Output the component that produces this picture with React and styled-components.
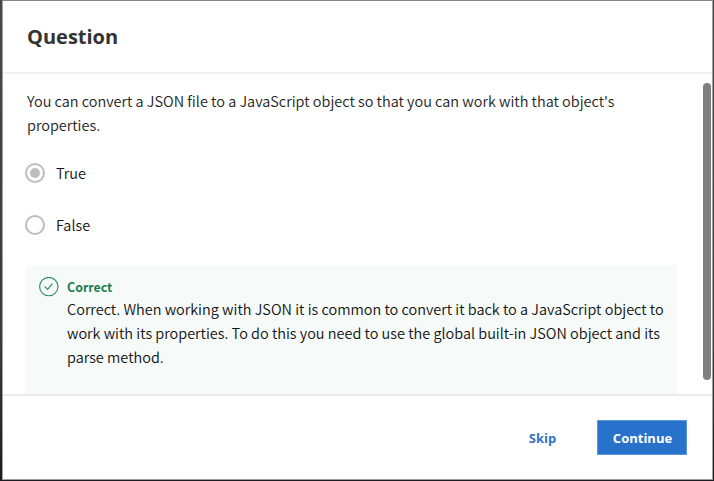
import React from "react";
import styled, { createGlobalStyle } from "styled-components";

const Global = createGlobalStyle`
  * { box-sizing: border-box; }
  body { margin: 0; background: #333335; overflow: hidden; }
`;

const Backdrop = styled.div`
  height: 481px;
  padding: 0 1px 1px 2px;
  background: linear-gradient(#48484a, #3c3c3e 70%, #1c1c1e);
`;

const Dialog = styled.section`
  height: 480px;
  display: flex;
  flex-direction: column;
  background: #fff;
  border: 1px solid #a0a0a0;
  border-top-color: #858585;
  color: #111;
  font-family: "Noto Sans CJK SC", "Noto Sans", sans-serif;
  font-weight: 350;
  font-size: 14.48px;
  line-height: 24px;
`;

const Header = styled.header`
  flex: 0 0 73px;
  padding: 20px 24px 0;
  border-bottom: 2px solid #efefef;
`;

const Title = styled.h1`
  margin: 0;
  font: 700 20px/32px "Open Sans", sans-serif;
  color: #333;
`;

const Content = styled.div`
  flex: 0 0 320px;
  display: flex;
  justify-content: space-between;
  overflow: hidden;
`;

const Body = styled.div`
  width: 651px;
  margin-left: 23px;
  padding-top: 15px;
`;

const Prompt = styled.p`
  margin: 0 0 24px 1px;
  color: #222;
`;

const Line = styled.span`
  display: block;
  white-space: nowrap;
`;

const Option = styled.label`
  display: flex;
  align-items: center;
  height: 24px;
  margin-bottom: 28px;
  gap: 11px;
`;

const Radio = styled.span`
  width: 20px;
  height: 20px;
  margin: -1px 0 0 -1px;
  display: grid;
  place-items: center;
  border: 2px solid #bdbdbd;
  border-radius: 50%;

  &::after {
    content: "";
    width: 10px;
    height: 10px;
    border-radius: 50%;
    background: ${(p) => (p.$checked ? "#bdbdbd" : "transparent")};
  }
`;

const Feedback = styled.div`
  height: 140px;
  padding: 12px 0 0 12.5px;
  display: flex;
  gap: 8.5px;
  background: #f6fbfa;
`;

const CheckIcon = styled.svg`
  flex: none;
  width: 20px;
  height: 20px;
  fill: none;
  stroke: #2a8a60;
`;

const FeedbackTitle = styled.strong`
  display: block;
  height: 20px;
  font: 700 12.4px/20px "Noto Sans CJK SC", sans-serif;
  color: #1d7d52;
`;

const Scrollbar = styled.div`
  width: 8px;
  height: 297px;
  margin: 9px 1px 0 0;
  border-radius: 4px;
  background: #808080;
`;

const Footer = styled.footer`
  flex: 1;
  display: flex;
  justify-content: flex-end;
  padding: 24px 25px 0 0;
  border-top: 2px solid #ebebeb;
`;

const Button = styled.button`
  width: ${(p) => (p.$primary ? 90 : 82)}px;
  height: 35px;
  padding: 1px 0 0 1px;
  margin-left: ${(p) => (p.$primary ? 14 : 0)}px;
  border: 1px solid ${(p) => (p.$primary ? "#5c97df" : "transparent")};
  background: ${(p) => (p.$primary ? "#2872cc" : "transparent")};
  color: ${(p) => (p.$primary ? "#fff" : "#3374c6")};
  font: 700 13px/20px "Open Sans", sans-serif;
`;

export default function App() {
  return (
    <>
      <Global />
      <Backdrop>
        <Dialog>
          <Header>
            <Title>Question</Title>
          </Header>
          <Content>
            <Body>
              <Prompt>
                <Line>You can convert a JSON file to a JavaScript object so that you can work with that object's</Line>
                <Line>properties.</Line>
              </Prompt>
              <Option>
                <Radio $checked />
                True
              </Option>
              <Option>
                <Radio />
                False
              </Option>
              <Feedback>
                <CheckIcon viewBox="0 0 20 20">
                  <circle cx="9.8" cy="9.6" r="9.2" strokeWidth="1.1" />
                  <path d="M5.6 9.3l3 3.1 4.9-5.8" strokeWidth="1.1" />
                </CheckIcon>
                <div>
                  <FeedbackTitle>Correct</FeedbackTitle>
                  <Line>Correct. When working with JSON it is common to convert it back to a JavaScript object to</Line>
                  <Line>work with its properties. To do this you need to use the global built-in JSON object and its</Line>
                  <Line>parse method.</Line>
                </div>
              </Feedback>
            </Body>
            <Scrollbar />
          </Content>
          <Footer>
            <Button>Skip</Button>
            <Button $primary>Continue</Button>
          </Footer>
        </Dialog>
      </Backdrop>
    </>
  );
}
